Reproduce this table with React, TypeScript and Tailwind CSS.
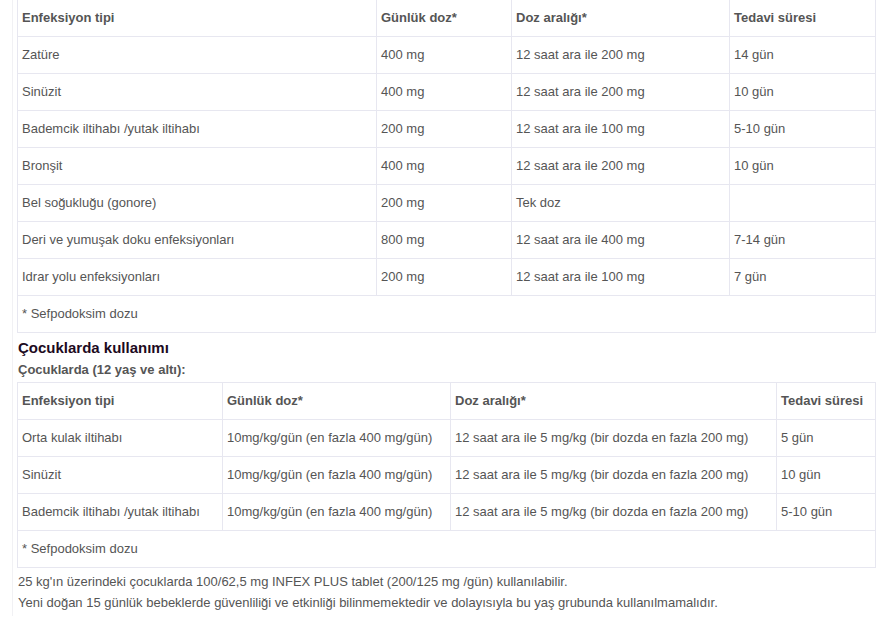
import React from 'react';

const adultRows = [
  ['Zatüre', '400 mg', '12 saat ara ile 200 mg', '14 gün'],
  ['Sinüzit', '400 mg', '12 saat ara ile 200 mg', '10 gün'],
  ['Bademcik iltihabı /yutak iltihabı', '200 mg', '12 saat ara ile 100 mg', '5-10 gün'],
  ['Bronşit', '400 mg', '12 saat ara ile 200 mg', '10 gün'],
  ['Bel soğukluğu (gonore)', '200 mg', 'Tek doz', ''],
  ['Deri ve yumuşak doku enfeksiyonları', '800 mg', '12 saat ara ile 400 mg', '7-14 gün'],
  ['Idrar yolu enfeksiyonları', '200 mg', '12 saat ara ile 100 mg', '7 gün'],
];

const childRows = [
  ['Orta kulak iltihabı', '10mg/kg/gün (en fazla 400 mg/gün)', '12 saat ara ile 5 mg/kg (bir dozda en fazla 200 mg)', '5 gün'],
  ['Sinüzit', '10mg/kg/gün (en fazla 400 mg/gün)', '12 saat ara ile 5 mg/kg (bir dozda en fazla 200 mg)', '10 gün'],
  ['Bademcik iltihabı /yutak iltihabı', '10mg/kg/gün (en fazla 400 mg/gün)', '12 saat ara ile 5 mg/kg (bir dozda en fazla 200 mg)', '5-10 gün'],
];

const headers = ['Enfeksiyon tipi', 'Günlük doz*', 'Doz aralığı*', 'Tedavi süresi'];

const cell = 'border border-[#e7e7f0] px-[4px] py-[8px] leading-[20px] text-left align-middle whitespace-nowrap';

const DoseTable: React.FC<{ rows: string[][]; widths: string[]; className?: string }> = ({ rows, widths, className }) => (
  <table className={`border-collapse table-fixed w-[858px] ${className ?? ''}`}>
    <colgroup>
      {widths.map((w, i) => (
        <col key={i} className={w} />
      ))}
    </colgroup>
    <thead>
      <tr>
        {headers.map((h) => (
          <th key={h} className={`${cell} font-bold`}>{h}</th>
        ))}
      </tr>
    </thead>
    <tbody>
      {rows.map((r, i) => (
        <tr key={i}>
          {r.map((c, j) => (
            <td key={j} className={cell}>{c}</td>
          ))}
        </tr>
      ))}
      <tr>
        <td colSpan={4} className={cell}>* Sefpodoksim dozu</td>
      </tr>
    </tbody>
  </table>
);

export default function App() {
  return (
    <div className="h-[617px] overflow-hidden bg-white text-[13px] text-[#555555]" style={{ fontFamily: '"Liberation Sans", Arial, sans-serif' }}>
      <div className="ml-[12px] h-full border-l border-[#f1f1f4] pl-[4px]">
        <DoseTable
          rows={adultRows}
          widths={['w-[359px]', 'w-[135px]', 'w-[218px]', 'w-[146px]']}
          className="-mt-px"
        />
        <h3 className="mt-[5px] pl-px text-[15px] font-bold leading-[20px] text-[#1d0a1e]">Çocuklarda kullanımı</h3>
        <p className="mt-[2px] pl-px font-bold leading-[20px]">Çocuklarda (12 yaş ve altı):</p>
        <DoseTable
          rows={childRows}
          widths={['w-[205px]', 'w-[228px]', 'w-[326px]', 'w-[99px]']}
          className="mt-[2px]"
        />
        <div className="mt-[3px] pl-px leading-[21px]">
          <p>25 kg'ın üzerindeki çocuklarda 100/62,5 mg INFEX PLUS tablet (200/125 mg /gün) kullanılabilir.</p>
          <p>Yeni doğan 15 günlük bebeklerde güvenliliği ve etkinliği bilinmemektedir ve dolayısıyla bu yaş grubunda kullanılmamalıdır.</p>
        </div>
      </div>
    </div>
  );
}
